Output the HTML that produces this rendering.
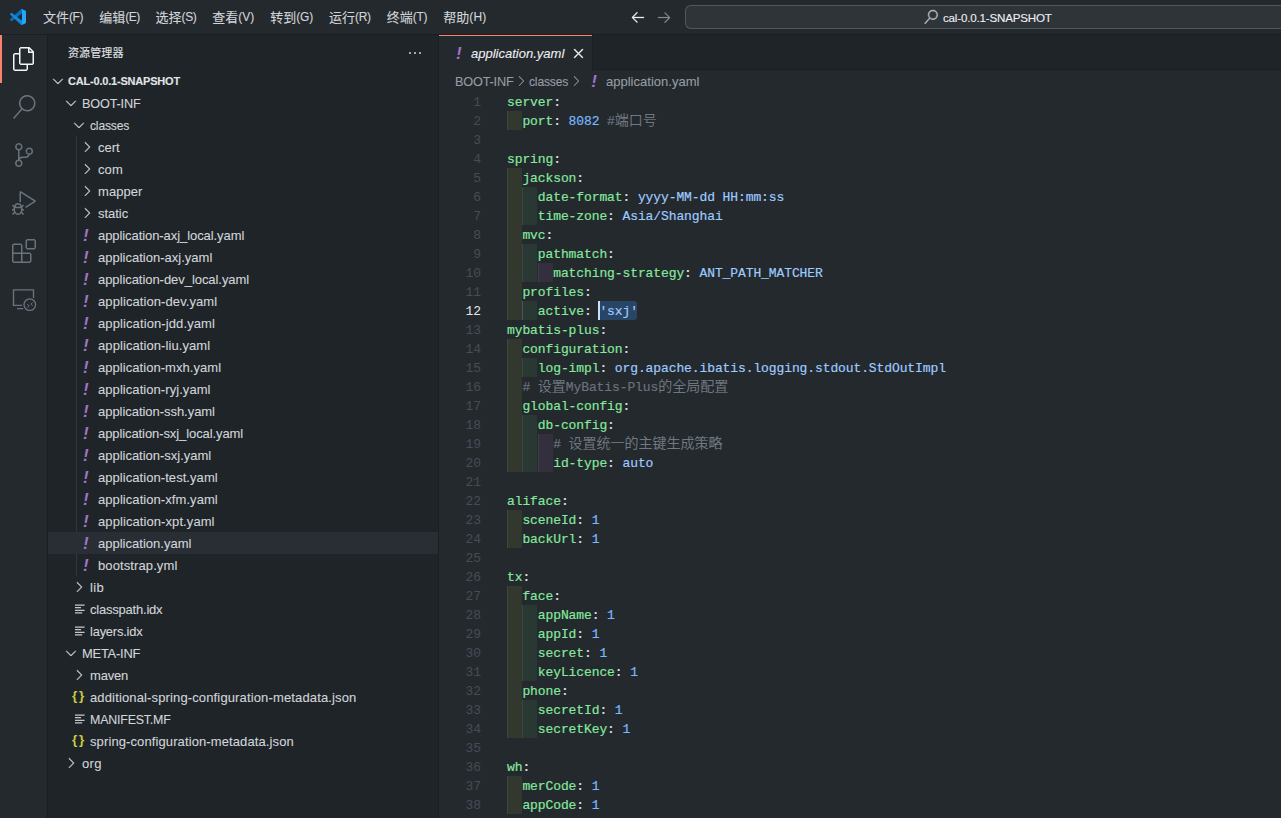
<!DOCTYPE html>
<html lang="zh-CN">
<head>
<meta charset="utf-8">
<title>application.yaml - cal-0.0.1-SNAPSHOT - Visual Studio Code</title>
<style>
html,body{margin:0;padding:0;background:#24292e;overflow:hidden}
body{width:1281px;height:818px;overflow:hidden;position:relative;font-family:"Liberation Sans","Noto Sans CJK SC",sans-serif;font-size:13px;color:#d1d5da}
header,nav,aside,main,section,div,span,svg,i,b{position:absolute;margin:0;padding:0}
span,i,b{white-space:pre;font-style:normal;font-weight:normal}
svg{overflow:visible}
.t{-webkit-text-stroke:0.1px currentColor}
#titlebar{left:0;top:0;width:1281px;height:34px;background:#24292e;border-bottom:1px solid #1b1f23}
#menubar{left:0;top:0;width:500px;height:35px}
.mi{top:0;height:35px;line-height:35px}
.mi span{top:0;height:35px;line-height:35px}
.mi .mc{left:0;font-size:13px}
.mi .mn{left:26px;font-size:12px}
#cc{left:685px;top:5px;width:595px;height:22px;border:1px solid #50565d;border-right:0;border-radius:6px 0 0 6px;background:#2f3439}
#cc span{left:257px;top:-6px;height:35px;line-height:35px;font-size:12px;color:#eef1f4}
#activitybar{left:0;top:35px;width:47px;height:783px;background:#24292e;border-right:1px solid #1b1f23}
#activitybar .on{left:0;top:0;width:2px;height:48px;background:#f9826c}
#activitybar svg{left:12px}
#sidebar{left:48px;top:35px;width:390px;height:783px;background:#1f2428;border-right:1px solid #1b1f23}
#side-title{left:20px;top:1px;height:35px;line-height:35px;font-size:11px;color:#e1e4e8}
#section{left:0;top:35px;width:390px;height:22px}
#section span{left:20px;top:0;height:22px;line-height:22px;font-size:11px;font-weight:bold;color:#e1e4e8}
#tree{left:0;top:57px;width:390px;height:682px}
#tree .guide{left:28px;top:44px;width:1px;height:440px;background:#2f363d}
.row{left:0;width:390px;height:22px}
.row.sel{background:#282e34}
.row .lbl{top:1px;height:22px;line-height:22px;font-size:13px}
.row .y,.y{height:22px;line-height:22px;font-family:"Liberation Sans","Noto Sans CJK SC",sans-serif;font-size:17px;font-weight:bold;font-style:italic;color:#a074c4}
.row .j{height:22px;line-height:22px;font-size:13.5px;font-weight:bold;color:#cbcb41;letter-spacing:1.6px}
#editor{left:439px;top:35px;width:842px;height:783px;background:#24292e}
#tabs{left:0;top:0;width:842px;height:35px;background:#1f2428}
#tabs:after{content:"";position:absolute;left:0;right:0;bottom:0;height:1px;background:#1b1f23}
#tab{left:0;top:0;width:153px;height:35px;background:#24292e;border-right:1px solid #1b1f23;z-index:1}
#tab:before{content:"";position:absolute;left:0;right:0;top:0;height:1px;background:#f9826c}
#tab .lbl{left:32px;top:1px;height:35px;line-height:35px;font-size:13px;font-style:italic;color:#eceff2}
#tab .y{left:17.1px;top:0.7px;height:35px;line-height:35px}
#crumbs{left:0;top:35px;width:842px;height:22px}
#crumbs span{top:1px;height:22px;line-height:22px;font-size:13px;color:#959da5}
#crumbs .y{color:#a074c4;font-size:17px}
#code{left:0;top:57px;width:842px;height:726px;font-family:"Liberation Mono","Noto Sans CJK SC",monospace}
.line{left:0;width:842px;height:19px}
.line span{top:1px;height:19px;line-height:19px;font-size:13px;letter-spacing:-0.102px;-webkit-text-stroke:0.18px currentColor}
.line .ln{left:2px;width:40px;text-align:right;color:#444d56;-webkit-text-stroke:0}
.line .ln.cur{color:#e1e4e8}
.line i{top:0;height:19px;box-sizing:border-box;border-left:1px solid rgba(255,255,255,0.075)}
.i0{left:68px;width:15px;background:rgba(255,255,64,0.07)}
.i1{left:83px;width:15px;background:rgba(127,255,127,0.07)}
.i2{left:99px;width:15px;background:rgba(255,127,255,0.07)}
.i3{left:114px;width:15px;background:rgba(79,236,236,0.07)}
.line b{top:0;height:19px}
.line .ag{left:83px;width:1px;background:#4b535c}
.line .selbg{left:159px;width:39px;background:rgba(51,146,255,0.267);border-radius:3px}
.line .cur2{left:159px;width:2px;background:#c8e1ff}
.k{color:#85e89d}.p{color:#e1e4e8}.s{color:#9ecbff}.n{color:#79b8ff}.c{color:#6a737d}
.line .z{font-size:14px;letter-spacing:0;font-weight:300;color:#7a838c}
</style>
</head>
<body>
<header id="titlebar">
<svg class="logo" style="left:10px;top:9px" width="16" height="16" viewBox="0 0 100 100"><path fill="#0a6fbe" d="M96.4614 10.7962L75.8569 0.875542C73.4719 -0.272773 70.6217 0.211611 68.75 2.08333L1.29858 63.5832C-0.515693 65.2373 -0.513607 68.0937 1.30308 69.7452L6.81272 74.754C8.29793 76.1042 10.5347 76.2036 12.1338 74.9905L93.3609 13.3699C96.086 11.3026 100 13.2462 100 16.6667V16.4275C100 14.0265 98.6246 11.8378 96.4614 10.7962Z"/><path fill="#0f88dc" d="M96.4614 89.2038L75.8569 99.1245C73.4719 100.273 70.6217 99.7884 68.75 97.9167L1.29858 36.4169C-0.515693 34.7627 -0.513607 31.9063 1.30308 30.2548L6.81272 25.246C8.29793 23.8958 10.5347 23.7964 12.1338 25.0095L93.3609 86.6301C96.086 88.6974 100 86.7538 100 83.3334V83.5726C100 85.9735 98.6246 88.1622 96.4614 89.2038Z"/><path fill="#25a7f4" d="M75.8578 99.1263C73.4721 100.274 70.6219 99.7885 68.75 97.9166C71.0564 100.223 75 98.5895 75 95.3278V4.67213C75 1.41039 71.0564 -0.223106 68.75 2.08329C70.6219 0.211402 73.4721 -0.273666 75.8578 0.873633L96.4587 10.7807C98.6234 11.8217 100 14.0112 100 16.4132V83.5871C100 85.9891 98.6234 88.1786 96.4586 89.2196L75.8578 99.1263Z"/></svg>
<nav id="menubar">
<div class="mi" style="left:43px"><span class="mc t">文件</span><span class="mn t" style="letter-spacing:-0.380px">(F)</span></div>
<div class="mi" style="left:99.19px"><span class="mc t">编辑</span><span class="mn t" style="letter-spacing:-0.526px">(E)</span></div>
<div class="mi" style="left:155.61px"><span class="mc t">选择</span><span class="mn t" style="letter-spacing:-0.418px">(S)</span></div>
<div class="mi" style="left:212.35px"><span class="mc t">查看</span><span class="mn t" style="letter-spacing:-0.018px">(V)</span></div>
<div class="mi" style="left:270.3px"><span class="mc t">转到</span><span class="mn t" style="letter-spacing:-0.184px">(G)</span></div>
<div class="mi" style="left:329.08px"><span class="mc t">运行</span><span class="mn t" style="letter-spacing:-0.348px">(R)</span></div>
<div class="mi" style="left:386.7px"><span class="mc t">终端</span><span class="mn t" style="letter-spacing:-0.224px">(T)</span></div>
<div class="mi" style="left:443.36px"><span class="mc t">帮助</span><span class="mn t" style="letter-spacing:0.134px">(H)</span></div>
</nav>
<svg style="left:630px;top:9px" width="16" height="16" viewBox="0 0 16 16"><path fill="#eef0f3" stroke="#eef0f3" stroke-width="0.3" d="M7 3.093l-5 5V8.8l5 5 .707-.707-4.146-4.147H14v-1H3.56L7.708 3.8 7 3.093z"/></svg>
<svg style="left:656px;top:9px" width="16" height="16" viewBox="0 0 16 16"><path fill="#858c93" stroke="#858c93" stroke-width="0.2" d="M9 13.887l5-5V8.18l-5-5-.707.707 4.146 4.147H2v1h10.44L8.292 13.18l.707.707z"/></svg>
<div id="cc"><svg style="left:238px;top:3.6px" width="14" height="14" viewBox="0 0 24 24"><path fill="#b9bec4" stroke="#b9bec4" stroke-width="0.9" d="M15.25 0a8.25 8.25 0 0 0-6.18 13.72L1 22.88l1.12 1 8.05-9.12A8.251 8.251 0 1 0 15.25.01V0zm0 15a6.75 6.75 0 1 1 0-13.5 6.75 6.75 0 0 1 0 13.5z"/></svg><span class="t" style="font-size:11.6px;letter-spacing:-0.188px">cal-0.0.1-SNAPSHOT</span></div>
</header>
<nav id="activitybar">
<div class="on"></div>
<svg style="top:12px" width="24" height="24" viewBox="0 0 24 24"><path fill="#f3f5f7" d="M17.5 0h-9L7 1.5V6H2.5L1 7.5v15.07L2.5 24h12.07L16 22.57V18h4.7l1.3-1.43V4.5L17.5 0zm0 2.12l2.38 2.38H17.5V2.12zm-3 20.38h-12v-15H7v9.07L8.5 18h6v4.5zm6-6h-12v-15H16V6h4.5v10.5z"/></svg>
<svg style="top:60px" width="24" height="24" viewBox="0 0 24 24"><path fill="#6a737d" d="M15.25 0a8.25 8.25 0 0 0-6.18 13.72L1 22.88l1.12 1 8.05-9.12A8.251 8.251 0 1 0 15.25.01V0zm0 15a6.75 6.75 0 1 1 0-13.5 6.75 6.75 0 0 1 0 13.5z"/></svg>
<svg style="top:108px" width="24" height="24" viewBox="0 0 24 24"><path fill="#6a737d" d="M21.007 8.222A3.738 3.738 0 0 0 15.045 5.2a3.737 3.737 0 0 0 1.156 6.583 2.988 2.988 0 0 1-2.668 1.67h-2.99a4.456 4.456 0 0 0-2.989 1.165V7.4a3.737 3.737 0 1 0-1.494 0v9.117a3.776 3.776 0 1 0 1.816.099 2.99 2.99 0 0 1 2.668-1.667h2.99a4.484 4.484 0 0 0 4.223-3.039 3.736 3.736 0 0 0 3.25-3.687zM4.565 3.738a2.242 2.242 0 1 1 4.484 0 2.242 2.242 0 0 1-4.484 0zm4.484 16.441a2.242 2.242 0 1 1-4.484 0 2.242 2.242 0 0 1 4.484 0zm8.221-9.715a2.242 2.242 0 1 1 0-4.485 2.242 2.242 0 0 1 0 4.485z"/></svg>
<svg style="top:156px" width="24" height="24" viewBox="0 0 24 24"><path fill="#6a737d" d="M10.94 13.5l-1.32 1.32a3.73 3.73 0 0 0-7.24 0L1.06 13.5 0 14.56l1.72 1.72-.22.22V18H0v1.5h1.5v.08c.077.489.214.966.41 1.42L0 22.94 1.06 24l1.65-1.65A4.308 4.308 0 0 0 6 24a4.31 4.31 0 0 0 3.29-1.65L10.94 24 12 22.94 10.09 21c.198-.464.336-.951.41-1.45v-.1H12V18h-1.5v-1.5l-.22-.22L12 14.56l-1.06-1.06zM6 13.5a2.25 2.25 0 0 1 2.25 2.25h-4.5A2.25 2.25 0 0 1 6 13.5zm3 6a3.33 3.33 0 0 1-3 3 3.33 3.33 0 0 1-3-3v-2.25h6v2.25zm14.76-9.9v1.26L13.5 17.37V15.6l8.5-5.37L9 2v9.46a5.07 5.07 0 0 0-1.5-.72V.63L8.64 0l15.12 9.6z"/></svg>
<svg style="top:204px" width="24" height="24" viewBox="0 0 24 24"><path fill="#6a737d" d="M13.5 1.5L15 0h7.5L24 1.5V9l-1.5 1.5H15L13.5 9V1.5zm1.5 0V9h7.5V1.5H15zM0 15V6l1.5-1.5H9L10.5 6v7.5H18l1.5 1.5v7.5L18 24H1.5L0 22.5V15zm9-1.5V6H1.5v7.5H9zM9 15H1.5v7.5H9V15zm1.5 7.5H18V15h-7.5v7.5z"/></svg>
<svg style="top:252px" width="24" height="24" viewBox="0 0 24 24"><path fill="none" stroke="#6a737d" stroke-width="1.4" d="M21.5 10.9V2.9H1.5V18.4H10.2M5.2 21.6H11.2"/><circle cx="17.8" cy="17.6" r="5.8" fill="none" stroke="#6a737d" stroke-width="1.3"/><path fill="none" stroke="#6a737d" stroke-width="1" d="M15.3 17l1.8 1.8-1.8 1.8M20.6 15.4l-1.7 1.7 1.7 1.7"/></svg>
</nav>
<aside id="sidebar">
<span id="side-title" class="t" style="letter-spacing:0.100px">资源管理器</span>
<svg style="left:359px;top:10px" width="16" height="16" viewBox="0 0 16 16"><path fill="#d1d5da" d="M4 8a1 1 0 1 1-2 0 1 1 0 0 1 2 0zm5 0a1 1 0 1 1-2 0 1 1 0 0 1 2 0zm5 0a1 1 0 1 1-2 0 1 1 0 0 1 2 0z"/></svg>
<div id="section"><svg style="left:2px;top:3px" width="16" height="16" viewBox="0 0 16 16"><path fill="#d1d5da" stroke="#d1d5da" stroke-width="0.3" d="M7.976 10.072l4.357-4.357.62.618L8.284 11h-.618L3 6.333l.619-.618 4.357 4.357z"/></svg><span class="t" style="letter-spacing:-0.196px">CAL-0.0.1-SNAPSHOT</span></div>
<div id="tree">
<div class="guide"></div>
<div class="row" style="top:0px"><svg style="left:15px;top:3px" width="16" height="16" viewBox="0 0 16 16"><path fill="#cfd3d8" stroke="#cfd3d8" stroke-width="0.3" d="M7.976 10.072l4.357-4.357.62.618L8.284 11h-.618L3 6.333l.619-.618 4.357 4.357z"/></svg><span class="lbl t" style="left:34px;font-size:12.7px;letter-spacing:-0.173px">BOOT-INF</span></div>
<div class="row" style="top:22px"><svg style="left:23px;top:3px" width="16" height="16" viewBox="0 0 16 16"><path fill="#cfd3d8" stroke="#cfd3d8" stroke-width="0.3" d="M7.976 10.072l4.357-4.357.62.618L8.284 11h-.618L3 6.333l.619-.618 4.357 4.357z"/></svg><span class="lbl t" style="left:42px;font-size:12.1px;letter-spacing:-0.177px">classes</span></div>
<div class="row" style="top:44px"><svg style="left:31px;top:3px" width="16" height="16" viewBox="0 0 16 16"><path fill="#cfd3d8" stroke="#cfd3d8" stroke-width="0.3" d="M10.072 8.024L5.715 3.667l.618-.62L11 7.716v.618L6.333 13l-.618-.619 4.357-4.357z"/></svg><span class="lbl t" style="left:50px;letter-spacing:0.016px">cert</span></div>
<div class="row" style="top:66px"><svg style="left:31px;top:3px" width="16" height="16" viewBox="0 0 16 16"><path fill="#cfd3d8" stroke="#cfd3d8" stroke-width="0.3" d="M10.072 8.024L5.715 3.667l.618-.62L11 7.716v.618L6.333 13l-.618-.619 4.357-4.357z"/></svg><span class="lbl t" style="left:50px;letter-spacing:0.083px">com</span></div>
<div class="row" style="top:88px"><svg style="left:31px;top:3px" width="16" height="16" viewBox="0 0 16 16"><path fill="#cfd3d8" stroke="#cfd3d8" stroke-width="0.3" d="M10.072 8.024L5.715 3.667l.618-.62L11 7.716v.618L6.333 13l-.618-.619 4.357-4.357z"/></svg><span class="lbl t" style="left:50px;letter-spacing:0.056px">mapper</span></div>
<div class="row" style="top:110px"><svg style="left:31px;top:3px" width="16" height="16" viewBox="0 0 16 16"><path fill="#cfd3d8" stroke="#cfd3d8" stroke-width="0.3" d="M10.072 8.024L5.715 3.667l.618-.62L11 7.716v.618L6.333 13l-.618-.619 4.357-4.357z"/></svg><span class="lbl t" style="left:50px;letter-spacing:-0.042px">static</span></div>
<div class="row" style="top:132px"><span class="y" style="left:35.1px;top:0.7px">!</span><span class="lbl t" style="left:50px;letter-spacing:-0.073px">application-axj_local.yaml</span></div>
<div class="row" style="top:154px"><span class="y" style="left:35.1px;top:0.7px">!</span><span class="lbl t" style="left:50px;letter-spacing:0.007px">application-axj.yaml</span></div>
<div class="row" style="top:176px"><span class="y" style="left:35.1px;top:0.7px">!</span><span class="lbl t" style="left:50px;letter-spacing:-0.050px">application-dev_local.yaml</span></div>
<div class="row" style="top:198px"><span class="y" style="left:35.1px;top:0.7px">!</span><span class="lbl t" style="left:50px;letter-spacing:0.086px">application-dev.yaml</span></div>
<div class="row" style="top:220px"><span class="y" style="left:35.1px;top:0.7px">!</span><span class="lbl t" style="left:50px;letter-spacing:0.107px">application-jdd.yaml</span></div>
<div class="row" style="top:242px"><span class="y" style="left:35.1px;top:0.7px">!</span><span class="lbl t" style="left:50px;letter-spacing:0.083px">application-liu.yaml</span></div>
<div class="row" style="top:264px"><span class="y" style="left:35.1px;top:0.7px">!</span><span class="lbl t" style="left:50px;letter-spacing:0.049px">application-mxh.yaml</span></div>
<div class="row" style="top:286px"><span class="y" style="left:35.1px;top:0.7px">!</span><span class="lbl t" style="left:50px;letter-spacing:0.063px">application-ryj.yaml</span></div>
<div class="row" style="top:308px"><span class="y" style="left:35.1px;top:0.7px">!</span><span class="lbl t" style="left:50px;letter-spacing:-0.041px">application-ssh.yaml</span></div>
<div class="row" style="top:330px"><span class="y" style="left:35.1px;top:0.7px">!</span><span class="lbl t" style="left:50px;letter-spacing:-0.087px">application-sxj_local.yaml</span></div>
<div class="row" style="top:352px"><span class="y" style="left:35.1px;top:0.7px">!</span><span class="lbl t" style="left:50px;letter-spacing:-0.011px">application-sxj.yaml</span></div>
<div class="row" style="top:374px"><span class="y" style="left:35.1px;top:0.7px">!</span><span class="lbl t" style="left:50px;letter-spacing:0.058px">application-test.yaml</span></div>
<div class="row" style="top:396px"><span class="y" style="left:35.1px;top:0.7px">!</span><span class="lbl t" style="left:50px;letter-spacing:0.065px">application-xfm.yaml</span></div>
<div class="row" style="top:418px"><span class="y" style="left:35.1px;top:0.7px">!</span><span class="lbl t" style="left:50px;letter-spacing:0.085px">application-xpt.yaml</span></div>
<div class="row sel" style="top:440px"><span class="y" style="left:35.1px;top:0.7px">!</span><span class="lbl t" style="left:50px;letter-spacing:0.010px">application.yaml</span></div>
<div class="row" style="top:462px"><span class="y" style="left:35.1px;top:0.7px">!</span><span class="lbl t" style="left:50px;letter-spacing:0.105px">bootstrap.yml</span></div>
<div class="row" style="top:484px"><svg style="left:23px;top:3px" width="16" height="16" viewBox="0 0 16 16"><path fill="#cfd3d8" stroke="#cfd3d8" stroke-width="0.3" d="M10.072 8.024L5.715 3.667l.618-.62L11 7.716v.618L6.333 13l-.618-.619 4.357-4.357z"/></svg><span class="lbl t" style="left:42px;letter-spacing:0.308px">lib</span></div>
<div class="row" style="top:506px"><svg style="left:27.4px;top:6px" width="10" height="10" viewBox="0 0 10 10"><path fill="#c5c9ce" d="M0 0.5h9.6v1.2H0zM0 3.1h6v1.2H0zM0 5.7h9.6v1.2H0zM0 8.3h7.2v1.2H0z"/></svg><span class="lbl t" style="left:42px;letter-spacing:-0.212px">classpath.idx</span></div>
<div class="row" style="top:528px"><svg style="left:27.4px;top:6px" width="10" height="10" viewBox="0 0 10 10"><path fill="#c5c9ce" d="M0 0.5h9.6v1.2H0zM0 3.1h6v1.2H0zM0 5.7h9.6v1.2H0zM0 8.3h7.2v1.2H0z"/></svg><span class="lbl t" style="left:42px;font-size:12.9px;letter-spacing:-0.204px">layers.idx</span></div>
<div class="row" style="top:550px"><svg style="left:15px;top:3px" width="16" height="16" viewBox="0 0 16 16"><path fill="#cfd3d8" stroke="#cfd3d8" stroke-width="0.3" d="M7.976 10.072l4.357-4.357.62.618L8.284 11h-.618L3 6.333l.619-.618 4.357 4.357z"/></svg><span class="lbl t" style="left:34px;font-size:12.9px;letter-spacing:-0.223px">META-INF</span></div>
<div class="row" style="top:572px"><svg style="left:23px;top:3px" width="16" height="16" viewBox="0 0 16 16"><path fill="#cfd3d8" stroke="#cfd3d8" stroke-width="0.3" d="M10.072 8.024L5.715 3.667l.618-.62L11 7.716v.618L6.333 13l-.618-.619 4.357-4.357z"/></svg><span class="lbl t" style="left:42px;letter-spacing:-0.169px">maven</span></div>
<div class="row" style="top:594px"><span class="j" style="left:24.1px;top:-1px">{}</span><span class="lbl t" style="left:42px;letter-spacing:0.139px">additional-spring-configuration-metadata.json</span></div>
<div class="row" style="top:616px"><svg style="left:27.4px;top:6px" width="10" height="10" viewBox="0 0 10 10"><path fill="#c5c9ce" d="M0 0.5h9.6v1.2H0zM0 3.1h6v1.2H0zM0 5.7h9.6v1.2H0zM0 8.3h7.2v1.2H0z"/></svg><span class="lbl t" style="left:42px;font-size:12.4px;letter-spacing:-0.179px">MANIFEST.MF</span></div>
<div class="row" style="top:638px"><span class="j" style="left:24.1px;top:-1px">{}</span><span class="lbl t" style="left:42px;letter-spacing:0.108px">spring-configuration-metadata.json</span></div>
<div class="row" style="top:660px"><svg style="left:15px;top:3px" width="16" height="16" viewBox="0 0 16 16"><path fill="#cfd3d8" stroke="#cfd3d8" stroke-width="0.3" d="M10.072 8.024L5.715 3.667l.618-.62L11 7.716v.618L6.333 13l-.618-.619 4.357-4.357z"/></svg><span class="lbl t" style="left:34px;letter-spacing:0.332px">org</span></div>
</div>
</aside>
<main id="editor">
<div id="tabs"></div>
<div id="tab"><span class="y">!</span><span class="lbl t" style="letter-spacing:0.005px">application.yaml</span><svg style="left:130.7px;top:9.5px" width="17" height="17" viewBox="0 0 16 16"><path fill="#f0f3f6" stroke="#f0f3f6" stroke-width="0.3" d="M8 8.707l3.646 3.647.708-.707L8.707 8l3.647-3.646-.707-.708L8 7.293 4.354 3.646l-.707.708L7.293 8l-3.646 3.646.707.708L8 8.707z"/></svg></div>
<div id="crumbs"><span class="t" style="left:16px;font-size:12.7px;letter-spacing:-0.173px">BOOT-INF</span><svg style="left:74px;top:3px" width="16" height="16" viewBox="0 0 16 16"><path fill="#959da5" d="M10.072 8.024L5.715 3.667l.618-.62L11 7.716v.618L6.333 13l-.618-.619 4.357-4.357z"/></svg><span class="t" style="left:90px;font-size:12.1px;letter-spacing:-0.177px">classes</span><svg style="left:128.5px;top:3px" width="16" height="16" viewBox="0 0 16 16"><path fill="#959da5" d="M10.072 8.024L5.715 3.667l.618-.62L11 7.716v.618L6.333 13l-.618-.619 4.357-4.357z"/></svg><span class="y" style="left:152.2px">!</span><span class="t" style="left:167px;letter-spacing:0.010px">application.yaml</span></div>
<div id="code">
<div class="line" style="top:0px"><span class="ln">1</span><span class="k" style="left:68px">server</span><span class="p" style="left:114.2px">:</span></div>
<div class="line" style="top:19px"><span class="ln">2</span><i class="i0"></i><span class="k" style="left:83.4px">port</span><span class="p" style="left:114.2px">:</span><span class="n" style="left:129.6px">8082</span><span class="c" style="left:168.1px">#</span><span class="c z" style="left:175.8px">端口号</span></div>
<div class="line" style="top:38px"><span class="ln">3</span></div>
<div class="line" style="top:57px"><span class="ln">4</span><span class="k" style="left:68px">spring</span><span class="p" style="left:114.2px">:</span></div>
<div class="line" style="top:76px"><span class="ln">5</span><i class="i0"></i><span class="k" style="left:83.4px">jackson</span><span class="p" style="left:137.3px">:</span></div>
<div class="line" style="top:95px"><span class="ln">6</span><i class="i0"></i><i class="i1"></i><span class="k" style="left:98.8px">date-format</span><span class="p" style="left:183.5px">:</span><span class="s" style="left:198.9px">yyyy-MM-dd HH:mm:ss</span></div>
<div class="line" style="top:114px"><span class="ln">7</span><i class="i0"></i><i class="i1"></i><span class="k" style="left:98.8px">time-zone</span><span class="p" style="left:168.1px">:</span><span class="s" style="left:183.5px">Asia/Shanghai</span></div>
<div class="line" style="top:133px"><span class="ln">8</span><i class="i0"></i><span class="k" style="left:83.4px">mvc</span><span class="p" style="left:106.5px">:</span></div>
<div class="line" style="top:152px"><span class="ln">9</span><i class="i0"></i><i class="i1"></i><span class="k" style="left:98.8px">pathmatch</span><span class="p" style="left:168.1px">:</span></div>
<div class="line" style="top:171px"><span class="ln">10</span><i class="i0"></i><i class="i1"></i><i class="i2"></i><span class="k" style="left:114.2px">matching-strategy</span><span class="p" style="left:245.1px">:</span><span class="s" style="left:260.5px">ANT_PATH_MATCHER</span></div>
<div class="line" style="top:190px"><span class="ln">11</span><i class="i0"></i><span class="k" style="left:83.4px">profiles</span><span class="p" style="left:145px">:</span></div>
<div class="line" style="top:209px"><span class="ln cur">12</span><i class="i0"></i><i class="i1"></i><b class="ag"></b><b class="selbg"></b><b class="cur2"></b><span class="k" style="left:98.8px">active</span><span class="p" style="left:145px">:</span><span class="s" style="left:160.4px">'sxj'</span></div>
<div class="line" style="top:228px"><span class="ln">13</span><span class="k" style="left:68px">mybatis-plus</span><span class="p" style="left:160.4px">:</span></div>
<div class="line" style="top:247px"><span class="ln">14</span><i class="i0"></i><span class="k" style="left:83.4px">configuration</span><span class="p" style="left:183.5px">:</span></div>
<div class="line" style="top:266px"><span class="ln">15</span><i class="i0"></i><i class="i1"></i><span class="k" style="left:98.8px">log-impl</span><span class="p" style="left:160.4px">:</span><span class="s" style="left:175.8px">org.apache.ibatis.logging.stdout.StdOutImpl</span></div>
<div class="line" style="top:285px"><span class="ln">16</span><i class="i0"></i><span class="c" style="left:83.4px"># </span><span class="c z" style="left:98.8px">设置</span><span class="c" style="left:126.8px">MyBatis-Plus</span><span class="c z" style="left:219.2px">的全局配置</span></div>
<div class="line" style="top:304px"><span class="ln">17</span><i class="i0"></i><span class="k" style="left:83.4px">global-config</span><span class="p" style="left:183.5px">:</span></div>
<div class="line" style="top:323px"><span class="ln">18</span><i class="i0"></i><i class="i1"></i><span class="k" style="left:98.8px">db-config</span><span class="p" style="left:168.1px">:</span></div>
<div class="line" style="top:342px"><span class="ln">19</span><i class="i0"></i><i class="i1"></i><i class="i2"></i><span class="c" style="left:114.2px"># </span><span class="c z" style="left:129.6px">设置统一的主键生成策略</span></div>
<div class="line" style="top:361px"><span class="ln">20</span><i class="i0"></i><i class="i1"></i><i class="i2"></i><span class="k" style="left:114.2px">id-type</span><span class="p" style="left:168.1px">:</span><span class="s" style="left:183.5px">auto</span></div>
<div class="line" style="top:380px"><span class="ln">21</span></div>
<div class="line" style="top:399px"><span class="ln">22</span><span class="k" style="left:68px">aliface</span><span class="p" style="left:121.9px">:</span></div>
<div class="line" style="top:418px"><span class="ln">23</span><i class="i0"></i><span class="k" style="left:83.4px">sceneId</span><span class="p" style="left:137.3px">:</span><span class="n" style="left:152.7px">1</span></div>
<div class="line" style="top:437px"><span class="ln">24</span><i class="i0"></i><span class="k" style="left:83.4px">backUrl</span><span class="p" style="left:137.3px">:</span><span class="n" style="left:152.7px">1</span></div>
<div class="line" style="top:456px"><span class="ln">25</span></div>
<div class="line" style="top:475px"><span class="ln">26</span><span class="k" style="left:68px">tx</span><span class="p" style="left:83.4px">:</span></div>
<div class="line" style="top:494px"><span class="ln">27</span><i class="i0"></i><span class="k" style="left:83.4px">face</span><span class="p" style="left:114.2px">:</span></div>
<div class="line" style="top:513px"><span class="ln">28</span><i class="i0"></i><i class="i1"></i><span class="k" style="left:98.8px">appName</span><span class="p" style="left:152.7px">:</span><span class="n" style="left:168.1px">1</span></div>
<div class="line" style="top:532px"><span class="ln">29</span><i class="i0"></i><i class="i1"></i><span class="k" style="left:98.8px">appId</span><span class="p" style="left:137.3px">:</span><span class="n" style="left:152.7px">1</span></div>
<div class="line" style="top:551px"><span class="ln">30</span><i class="i0"></i><i class="i1"></i><span class="k" style="left:98.8px">secret</span><span class="p" style="left:145px">:</span><span class="n" style="left:160.4px">1</span></div>
<div class="line" style="top:570px"><span class="ln">31</span><i class="i0"></i><i class="i1"></i><span class="k" style="left:98.8px">keyLicence</span><span class="p" style="left:175.8px">:</span><span class="n" style="left:191.2px">1</span></div>
<div class="line" style="top:589px"><span class="ln">32</span><i class="i0"></i><span class="k" style="left:83.4px">phone</span><span class="p" style="left:121.9px">:</span></div>
<div class="line" style="top:608px"><span class="ln">33</span><i class="i0"></i><i class="i1"></i><span class="k" style="left:98.8px">secretId</span><span class="p" style="left:160.4px">:</span><span class="n" style="left:175.8px">1</span></div>
<div class="line" style="top:627px"><span class="ln">34</span><i class="i0"></i><i class="i1"></i><span class="k" style="left:98.8px">secretKey</span><span class="p" style="left:168.1px">:</span><span class="n" style="left:183.5px">1</span></div>
<div class="line" style="top:646px"><span class="ln">35</span></div>
<div class="line" style="top:665px"><span class="ln">36</span><span class="k" style="left:68px">wh</span><span class="p" style="left:83.4px">:</span></div>
<div class="line" style="top:684px"><span class="ln">37</span><i class="i0"></i><span class="k" style="left:83.4px">merCode</span><span class="p" style="left:137.3px">:</span><span class="n" style="left:152.7px">1</span></div>
<div class="line" style="top:703px"><span class="ln">38</span><i class="i0"></i><span class="k" style="left:83.4px">appCode</span><span class="p" style="left:137.3px">:</span><span class="n" style="left:152.7px">1</span></div>
</div>
</main>
</body>
</html>
